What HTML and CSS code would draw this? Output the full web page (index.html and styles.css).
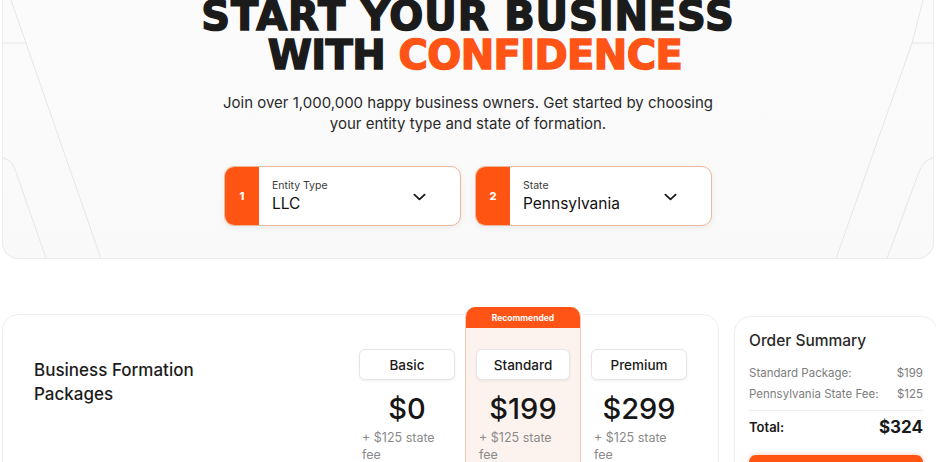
FILE: index.html
```html
<!DOCTYPE html>
<html lang="en">
<head>
<meta charset="utf-8">
<title>Start your business</title>
<link rel="stylesheet" href="styles.css">
</head>
<body>
<div class="page">
  <section class="hero">
    <svg class="hero-deco" viewBox="0 0 932 258" preserveAspectRatio="none" aria-hidden="true">
      <path d="M0 43 H23 M8 0 L23 43 L98 258 M0 158 Q10 160 13 172 L43 258" />
      <path d="M932 43 H911 M922 0 L911 43 L835 258 M932 158 Q922 160 918 172 L886 258" />
    </svg>
    <h1 class="hero-title"><span class="title-l1">START YOUR BUSINESS</span><br><span class="title-l2">WITH <span class="accent">CONFIDENCE</span></span></h1>
    <p class="hero-sub">Join over 1,000,000 happy business owners. Get started by choosing<br>your entity type and state of formation.</p>
    <div class="selectors">
      <div class="select">
        <div class="select-num">1</div>
        <div class="select-body">
          <span class="select-label">Entity Type</span>
          <span class="select-value">LLC</span>
        </div>
        <svg class="chevron" viewBox="0 0 14 8"><path d="M1.5 1.5 L7 6.5 L12.5 1.5"/></svg>
      </div>
      <div class="select">
        <div class="select-num">2</div>
        <div class="select-body">
          <span class="select-label">State</span>
          <span class="select-value">Pennsylvania</span>
        </div>
        <svg class="chevron" viewBox="0 0 14 8"><path d="M1.5 1.5 L7 6.5 L12.5 1.5"/></svg>
      </div>
    </div>
  </section>

  <section class="main">
    <div class="card packages">
      <h2 class="packages-title">Business Formation<br>Packages</h2>
      <div class="plans">
        <div class="plan">
          <div class="plan-tag"></div>
          <div class="plan-btn">Basic</div>
          <div class="plan-price">$0</div>
          <div class="plan-note">+ $125 state<br>fee</div>
        </div>
        <div class="plan plan--rec">
          <div class="plan-tag">Recommended</div>
          <div class="plan-btn">Standard</div>
          <div class="plan-price">$199</div>
          <div class="plan-note">+ $125 state<br>fee</div>
        </div>
        <div class="plan">
          <div class="plan-tag"></div>
          <div class="plan-btn">Premium</div>
          <div class="plan-price">$299</div>
          <div class="plan-note">+ $125 state<br>fee</div>
        </div>
      </div>
    </div>
    <aside class="card summary">
      <h3 class="summary-title">Order Summary</h3>
      <div class="summary-row"><span>Standard Package:</span><span>$199</span></div>
      <div class="summary-row"><span>Pennsylvania State Fee:</span><span>$125</span></div>
      <div class="summary-total"><span>Total:</span><span class="total-amt">$324</span></div>
      <div class="summary-btn"></div>
    </aside>
  </section>
</div>
</body>
</html>
```

FILE: styles.css
```css
* { box-sizing: border-box; }
html, body { margin: 0; padding: 0; background: #fff; }
body {
  font-family: "Inter", "Noto Sans", sans-serif;
  color: #1a1a1a;
  width: 936px;
  height: 462px;
  overflow: hidden;
}
.page { padding: 0 0 0 2px; }

/* HERO */
.hero {
  position: relative;
  background: linear-gradient(180deg, #fbfbfb 0%, #f9f9f9 100%);
  border: 1px solid #ececec;
  border-top: 0;
  border-radius: 0 0 16px 16px;
  height: 259px;
  margin-right: 2px;
  display: flex;
  flex-direction: column;
  align-items: center;
}
.hero-deco {
  position: absolute;
  inset: 0;
  width: 100%;
  height: 100%;
  fill: none;
  stroke: #e6e6e6;
  stroke-width: 1;
  pointer-events: none;
}
.hero-title {
  position: relative;
  margin: -3px 0 0;
  font-family: "DejaVu Sans", sans-serif;
  font-weight: 700;
  font-size: 40px;
  line-height: 39px;
  text-align: center;
  color: #1b1b1b;
  -webkit-text-stroke: 1.5px currentColor;
}
.title-l1 { letter-spacing: 0.9px; }
.title-l2 { letter-spacing: -0.6px; padding-left: 14px; }
.accent { color: #ff5416; }
.hero-sub {
  position: relative;
  margin: 17px 0 0;
  font-size: 15px;
  line-height: 21px;
  color: #2a2a2a;
  text-align: center;
}
.selectors {
  position: relative;
  display: flex;
  gap: 14px;
  margin-top: 32px;
}
.select {
  width: 237px;
  height: 60px;
  display: flex;
  align-items: center;
  background: #fff;
  border: 1px solid #ecb89c;
  border-radius: 10px;
  overflow: hidden;
  box-shadow: 0 2px 6px rgba(0,0,0,0.06);
}
.select-num {
  width: 34px;
  height: 100%;
  background: #ff5412;
  color: #fff;
  font-weight: 800;
  font-size: 11px;
  display: flex;
  align-items: center;
  justify-content: center;
}
.select-body {
  flex: 1;
  padding-left: 13px;
  display: flex;
  flex-direction: column;
  gap: 1px;
}
.select-label { font-size: 10.5px; color: #3a3a3a; line-height: 14px; }
.select-value { font-size: 15.5px; color: #111; line-height: 20px; }
.chevron {
  width: 13px;
  height: 8px;
  margin-right: 34px;
  margin-top: 2px;
  fill: none;
  stroke: #1a1a1a;
  stroke-width: 2;
  stroke-linecap: round;
  stroke-linejoin: round;
}

/* MAIN */
.main {
  display: flex;
  gap: 15px;
  margin-top: 55px;
}
.card {
  background: #fff;
  border: 1px solid #eeeeee;
  border-radius: 16px;
  flex-shrink: 0;
}
.packages {
  width: 717px;
  height: 200px;
  display: flex;
  padding: 0 21px 0 31px;
}
.packages-title {
  margin: 43px 0 0;
  flex: 1;
  font-size: 17px;
  font-weight: 500;
  line-height: 24px;
  color: #1c1c1c;
}
.plans {
  display: flex;
  margin-top: -8px;
}
.plan {
  width: 116px;
  padding: 0 10px;
  display: flex;
  flex-direction: column;
}
.plan--rec {
  background: #fdf3ee;
  border: 1px solid #f2c9b3;
  border-top: 0;
  border-radius: 10px 10px 0 0;
  padding: 0 10px;
  overflow: hidden;
}
.plan-tag {
  height: 21px;
  margin: 0 -10px;
  font-size: 8.5px;
  font-weight: 700;
  color: #fff;
  display: flex;
  align-items: center;
  justify-content: center;
}
.plan--rec .plan-tag { background: #ff5416; margin: 0 -11px; }
.plan-btn {
  margin-top: 21px;
  height: 31px;
  background: #fff;
  border: 1px solid #e6e6e6;
  border-radius: 6px;
  box-shadow: 0 1px 3px rgba(0,0,0,0.07);
  font-size: 13.5px;
  font-weight: 500;
  display: flex;
  align-items: center;
  justify-content: center;
  color: #1a1a1a;
}
.plan-price {
  margin-top: 12px;
  text-align: center;
  font-size: 29px;
  font-weight: 500;
  line-height: 34px;
  color: #161616;
}
.plan-note {
  margin-top: 4px;
  padding-left: 3px;
  font-size: 12.5px;
  line-height: 16.5px;
  color: #8a8a8a;
}

.summary {
  width: 204px;
  height: 180px;
  margin-top: 2px;
  padding: 14px 14px 0 14px;
}
.summary-title {
  margin: 0 0 12px;
  font-size: 15.5px;
  font-weight: 500;
  line-height: 20px;
  color: #2a2a2a;
}
.summary-row {
  display: flex;
  justify-content: space-between;
  font-size: 11.5px;
  line-height: 21px;
  color: #7d7d7d;
}
.summary-total {
  display: flex;
  justify-content: space-between;
  align-items: center;
  margin-top: 5px;
  padding-top: 6px;
  border-top: 1px solid #ededed;
  font-size: 13px;
  font-weight: 600;
  color: #1a1a1a;
}
.total-amt { font-size: 17px; font-weight: 700; }
.summary-btn {
  margin-top: 18px;
  height: 36px;
  background: #ff5412;
  border-radius: 7px;
  box-shadow: 0 -1px 4px rgba(255,84,18,0.25);
}
```
